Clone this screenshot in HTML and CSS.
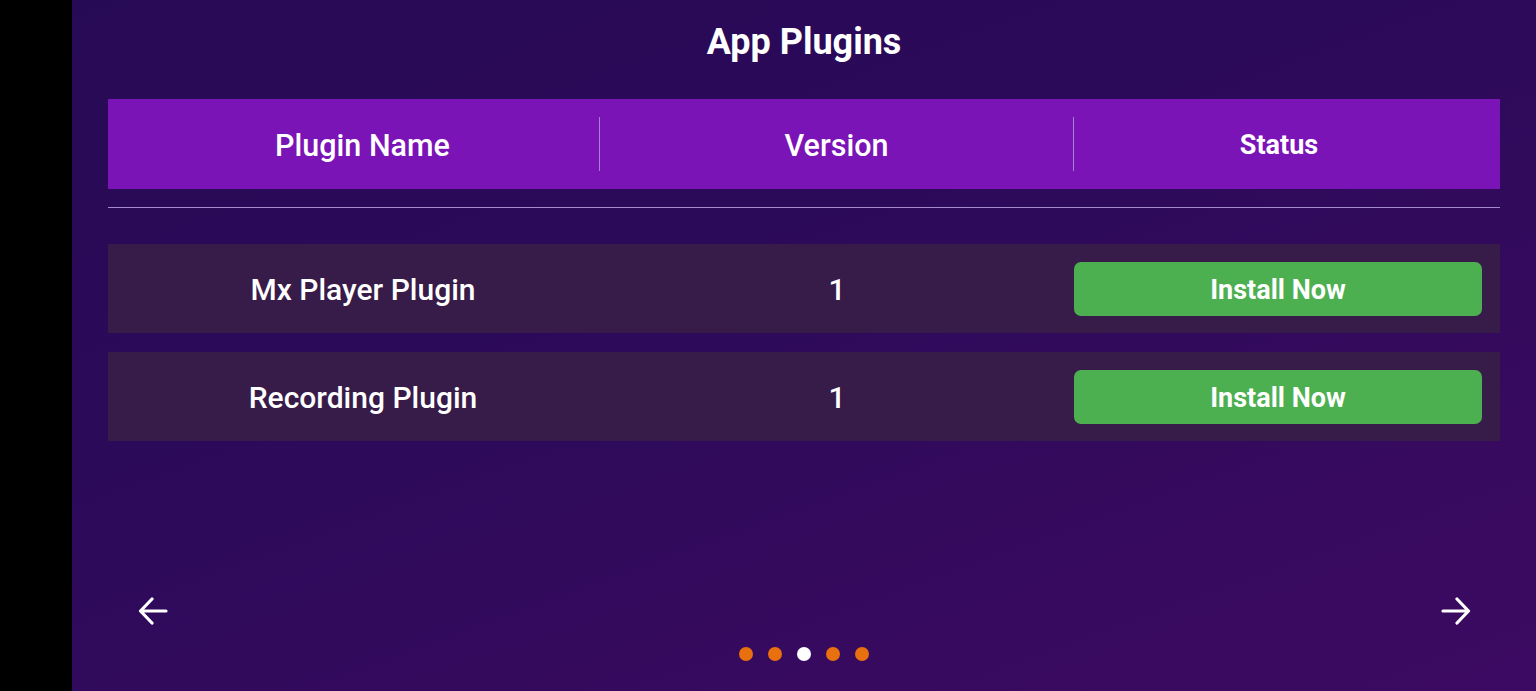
FILE: index.html
```html
<!DOCTYPE html>
<html>
<head>
<meta charset="utf-8">
<link rel="stylesheet" href="styles.css">
</head>
<body>
<div class="app">
  <div class="edge"></div>
  <main class="main">
    <h1 class="title">App Plugins</h1>
    <div class="thead">
      <div class="th th-name">Plugin Name</div>
      <div class="th th-ver">Version</div>
      <div class="th th-status">Status</div>
    </div>
    <div class="rule"></div>
    <div class="rows">
      <div class="row">
        <div class="td td-name">Mx Player Plugin</div>
        <div class="td td-ver">1</div>
        <div class="td td-status"><button class="btn">Install Now</button></div>
      </div>
      <div class="row">
        <div class="td td-name">Recording Plugin</div>
        <div class="td td-ver">1</div>
        <div class="td td-status"><button class="btn">Install Now</button></div>
      </div>
    </div>
    <div class="spacer"></div>
    <div class="nav">
      <svg class="arrow" width="30" height="28" viewBox="0 0 30 28"><path d="M28 14H3M14 2L2.5 14L14 26" fill="none" stroke="#fff" stroke-width="3.2" stroke-linecap="round" stroke-linejoin="round"/></svg>
      <svg class="arrow" width="30" height="28" viewBox="0 0 30 28"><path d="M2 14H27M16 2L27.5 14L16 26" fill="none" stroke="#fff" stroke-width="3.2" stroke-linecap="round" stroke-linejoin="round"/></svg>
    </div>
    <div class="dots">
      <span class="dot"></span>
      <span class="dot"></span>
      <span class="dot active"></span>
      <span class="dot"></span>
      <span class="dot"></span>
    </div>
  </main>
</div>
</body>
</html>
```

FILE: styles.css
```css
* { box-sizing: border-box; }
html, body { margin: 0; padding: 0; height: 100%; }
body {
  font-family: Roboto, "Liberation Sans", sans-serif;
  color: #fff;
  background: #000;
  overflow: hidden;
}
.app { display: flex; height: 691px; }
.edge { width: 72px; background: #000; flex: none; }
.main {
  flex: 1;
  display: flex;
  flex-direction: column;
  padding: 0 36px;
  background: linear-gradient(160deg, #270a55 0%, #2c0a5a 40%, #360a5e 75%, #3c0a62 100%);
}
.title {
  margin: 0;
  padding-top: 20px;
  height: 99px;
  line-height: 44px;
  font-size: 36px;
  font-weight: 700;
  text-align: center;
}
.thead {
  display: flex;
  height: 90px;
  background: #7a14b6;
  align-items: center;
}
.th {
  height: 54px;
  display: flex;
  align-items: center;
  justify-content: center;
  font-size: 30.5px;
  font-weight: 500;
  padding-top: 2px;
}
.th-name { width: 492px; padding-left: 18px; border-right: 1px solid #a77fd4; }
.th-ver { width: 474px; border-right: 1px solid #a77fd4; }
.th-status { flex: 1; padding-right: 16px; font-size: 27px; font-weight: 700; }
.rule { height: 1px; margin-top: 18px; background: #a68ad0; }
.rows { display: flex; flex-direction: column; gap: 19px; margin-top: 36px; }
.row {
  display: flex;
  align-items: center;
  height: 89px;
  background: #371b49;
  padding-top: 2px;
}
.td { font-size: 30px; font-weight: 500; text-align: center; }
.td-name { width: 492px; padding-left: 18px; }
.td-ver { width: 474px; }
.td-status { flex: 1; padding-right: 18px; display: flex; margin-top: -2px; }
.btn {
  flex: 1;
  height: 54px;
  border: none;
  border-radius: 7px;
  background: #4caf50;
  color: #fff;
  font-family: inherit;
  font-size: 27px;
  font-weight: 700;
  padding: 2px 0 0;
}
.spacer { flex: 1; }
.nav {
  display: flex;
  justify-content: space-between;
  padding: 0 29px 0 30px;
  height: 28px;
}
.arrow { display: block; }
.dots {
  display: flex;
  justify-content: center;
  gap: 15px;
  margin-top: 22px;
  padding-bottom: 30px;
}
.dot {
  width: 14px;
  height: 14px;
  border-radius: 50%;
  background: #e8700e;
}
.dot.active { background: #fff; }
```
